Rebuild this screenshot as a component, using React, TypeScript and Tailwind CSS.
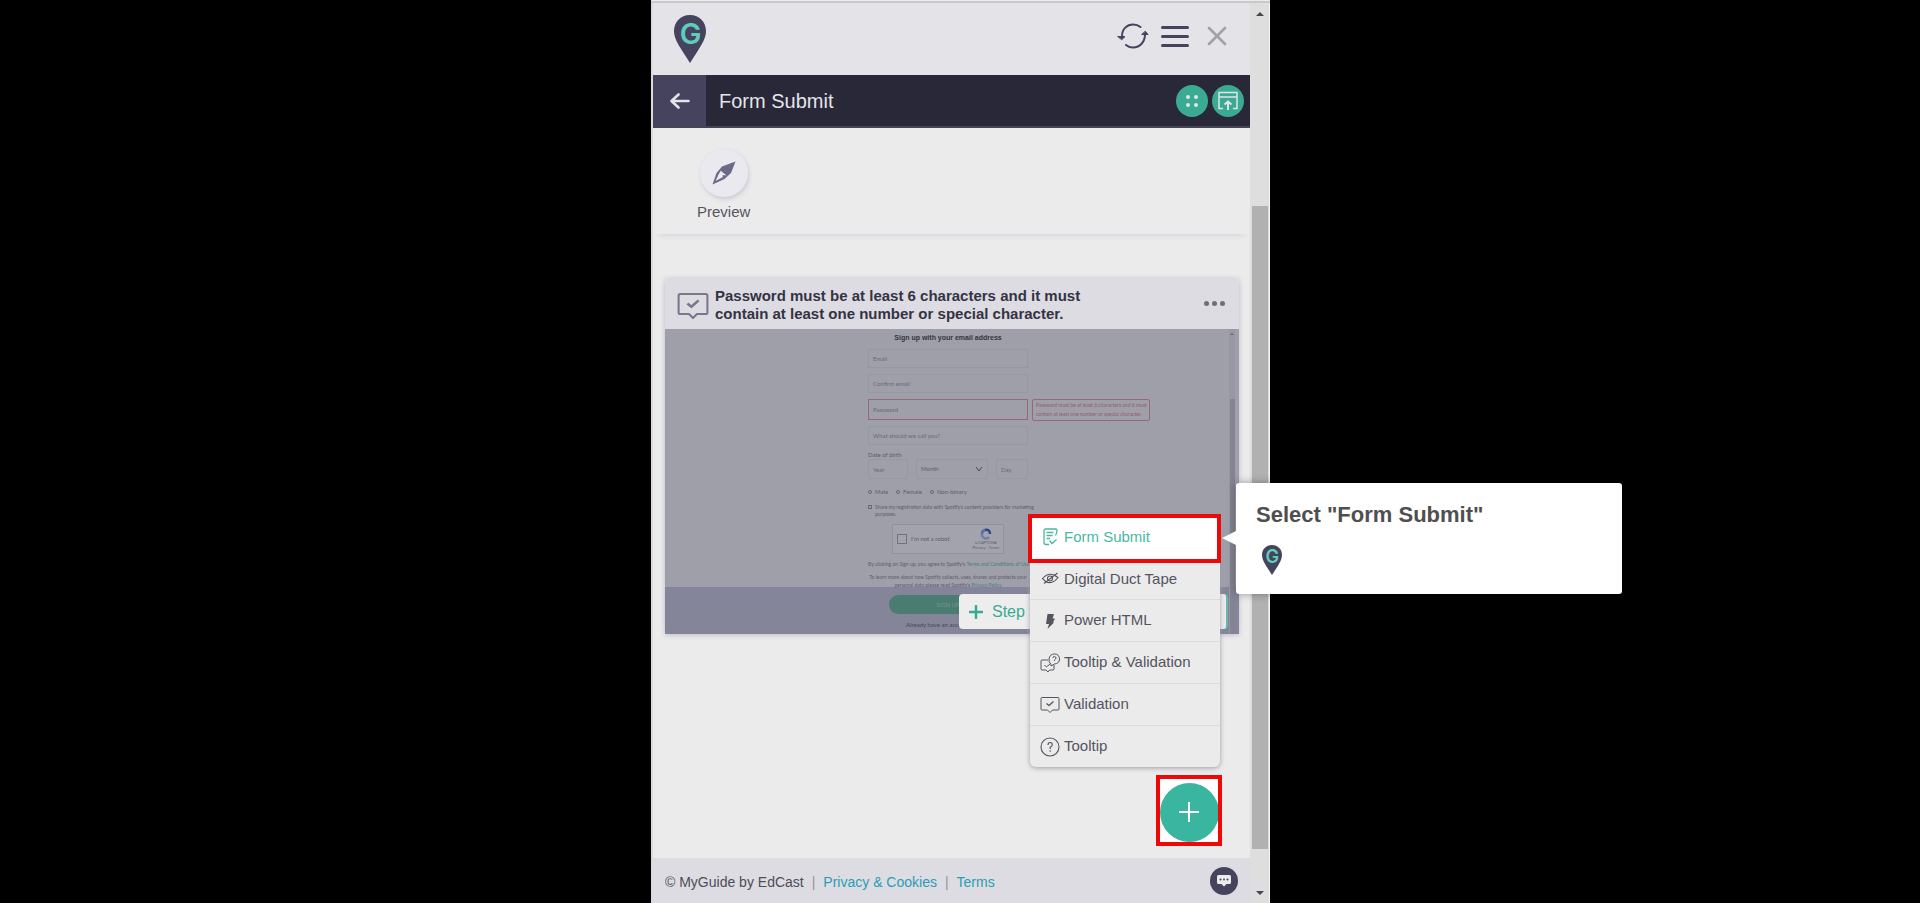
import React from 'react';
import { X } from 'lucide-react';

type IconProps = { className?: string };

const PinLogo: React.FC<IconProps> = ({ className }) => (
  <svg viewBox="0 0 34 48" className={className} aria-hidden="true">
    <path d="M17 0C7.500 0 1 7 1 16c0 7 4 13 8 19.500L17 48l8-12.500C29 29 33 23 33 16 33 7 26.500 0 17 0z" fill="#45435d" />
    <text x="17.500" y="28.500" textAnchor="middle" fontFamily="Inter, sans-serif" fontSize="29" fontWeight="600" fill="#5fcdbb">G</text>
  </svg>
);

const RefreshIcon: React.FC<IconProps> = ({ className }) => (
  <svg viewBox="0 0 32 28" fill="none" stroke="currentColor" strokeWidth="2" strokeLinecap="round" className={className} aria-hidden="true">
    <path d="M5 14C5 7 10 2.500 16 2.500c3 0 5.500.8 7.500 2.500" />
    <path d="M28 12c0 8-5 13.500-12 13.500-3 0-5-.8-7-2.500" />
    <path d="M1 14.500h7L5 17.500z" fill="currentColor" strokeWidth="1" />
    <path d="M25 12.500h6L28.500 9.500z" fill="currentColor" strokeWidth="1" />
  </svg>
);

const BackIcon: React.FC<IconProps> = ({ className }) => (
  <svg viewBox="0 0 20 16" fill="none" stroke="currentColor" strokeWidth="2.600" strokeLinecap="round" strokeLinejoin="round" className={className} aria-hidden="true">
    <path d="M18.500 8H2M8.500 1.500L1.500 8l7 6.500" />
  </svg>
);

const WindowUpIcon: React.FC<IconProps> = ({ className }) => (
  <svg viewBox="0 0 20 20" fill="none" stroke="currentColor" strokeWidth="1.500" className={className} aria-hidden="true">
    <path d="M5 17.500H1V1.500h18v16h-4M1 6h18" />
    <path d="M10 19v-8M6.500 13.500L10 10.500l3.500 3" strokeWidth="2" />
  </svg>
);

const CompassIcon: React.FC<IconProps> = ({ className }) => (
  <svg viewBox="0 0 24 24" className={className} aria-hidden="true">
    <path d="M23.500.500L10 5.500 4.500 12 .500 23.500l12-5.500L19 12z" fill="#6b6987" />
    <path d="M8.500 10l-2 3.500L3.500 20l7.500-4z" fill="#ebebf0" />
    <path d="M8.500 9.500l6 5-4-.500-.500 2.500z" fill="#ebebf0" />
  </svg>
);

const ChatIcon: React.FC<IconProps> = ({ className }) => (
  <svg viewBox="0 0 16 14" className={className} aria-hidden="true">
    <path d="M2.500 1h11Q15 1 15 2.500v6Q15 10 13.500 10H10.500L8 12.500 5.500 10h-3Q1 10 1 8.500v-6Q1 1 2.500 1z" fill="#ebebeb" />
    <g fill="#45435d">
      <circle cx="4.500" cy="5.500" r="1" />
      <circle cx="8" cy="5.500" r="1" />
      <circle cx="11.500" cy="5.500" r="1" />
    </g>
  </svg>
);

const ValidationIcon: React.FC<IconProps & { strokeWidth?: number }> = ({ className, strokeWidth = 1 }) => (
  <svg viewBox="0 0 20 17" fill="none" stroke="currentColor" strokeLinejoin="round" className={className} aria-hidden="true">
    <path d="M2 1h16q1 0 1 1v10.500q0 1-1 1h-5.500L10 16l-2.500-2.500H2q-1 0-1-1V2q0-1 1-1z" strokeWidth={strokeWidth} />
    <path d="M6.500 7l2.500 2 4.500-4" strokeWidth={strokeWidth + 0.3} />
  </svg>
);

const FormSubmitIcon: React.FC<IconProps> = ({ className }) => (
  <svg viewBox="0 0 20 20" fill="none" stroke="currentColor" strokeWidth="1.300" className={className} aria-hidden="true">
    <path d="M9 17.500H6Q4 17.500 4 15.500V3.500Q4 2 5.500 2h10Q17 2 17 3.500q0 2-1.500 5M6.500 5.500h7M6.500 8.500h6M6.500 11.500h3.500" />
    <path d="M9.500 13.500l2.500 3 4.500-4" />
  </svg>
);

const DuctTapeIcon: React.FC<IconProps> = ({ className }) => (
  <svg viewBox="0 0 20 20" fill="none" stroke="currentColor" strokeWidth="1.100" className={className} aria-hidden="true">
    <path d="M2.500 9.500Q8 3.500 14 6l4 2.500q-5 7-12 4.500z" />
    <circle cx="10" cy="9.500" r="2.500" />
    <path d="M4 14.500L17.500 4" />
  </svg>
);

const PowerIcon: React.FC<IconProps> = ({ className }) => (
  <svg viewBox="0 0 20 20" fill="currentColor" className={className} aria-hidden="true">
    <path d="M7.500 3h6.500l-1.500 4.500h2.500l-2 4h1L7.500 18l1.500-5H6z" />
  </svg>
);

const TooltipIcon: React.FC<IconProps> = ({ className }) => (
  <svg viewBox="0 0 20 20" fill="none" stroke="currentColor" className={className} aria-hidden="true">
    <circle cx="10" cy="10" r="9" strokeWidth="1.100" />
    <path d="M8 8q0-2.500 2.200-2.500T12.200 8Q12 9.500 10.200 10.200V12M10.200 13.300v1.400" strokeWidth="1.200" />
  </svg>
);

const TooltipValidationIcon: React.FC<IconProps> = ({ className }) => (
  <svg viewBox="0 0 20 20" fill="none" stroke="currentColor" strokeWidth="1" className={className} aria-hidden="true">
    <path d="M8 7H2Q1 7 1 8v8q0 1 1 1h4l2 2 1.500-2H13q1 0 1-1v-4" />
    <path d="M11 11.500Q8.500 9 9 6q.8-5 5.500-5T19.500 6q0 4.500-5 5l-3.500 2z" />
    <path d="M13 5q0-1.700 1.500-1.500T16 5q0 1-1.500 1.800v1M4.500 12l2 2 4-3.500" />
  </svg>
);

const menuItems = [
  { label: 'Form Submit', Icon: FormSubmitIcon },
  { label: 'Digital Duct Tape', Icon: DuctTapeIcon },
  { label: 'Power HTML', Icon: PowerIcon },
  { label: 'Tooltip & Validation', Icon: TooltipValidationIcon },
  { label: 'Validation', Icon: ValidationIcon },
  { label: 'Tooltip', Icon: TooltipIcon },
];

const TopBar: React.FC = () => (
  <header className="flex h-18 items-center justify-between bg-[#e4e3e8] pr-[17px] pl-5">
    <PinLogo className="h-12 w-[34px]" />
    <div className="flex items-center gap-3 pb-[6px] text-[#45435d]">
      <button aria-label="Refresh"><RefreshIcon className="h-7 w-8" /></button>
      <button aria-label="Menu" className="flex w-7 flex-col gap-[6px]">
        <span className="h-[3px] rounded-full bg-current" />
        <span className="h-[3px] rounded-full bg-current" />
        <span className="h-[3px] rounded-full bg-current" />
      </button>
      <button aria-label="Close" className="text-[#a3a2a7]"><X size={32} strokeWidth={2} /></button>
    </div>
  </header>
);

const TitleBar: React.FC = () => (
  <div className="flex h-[53px] items-center border-b-2 border-[#454452] bg-[#282839] text-[#e4e4e8]">
    <button aria-label="Back" className="flex h-full w-[53px] items-center justify-center bg-[#45435d]">
      <BackIcon className="h-4 w-5" />
    </button>
    <h1 className="grow pl-[13px] text-[20px]">Form Submit</h1>
    <div className="flex gap-1 pr-[6px]">
      <button aria-label="Steps" className="flex size-8 items-center justify-center rounded-full bg-[#3aaa93]">
        <span className="grid grid-cols-2 gap-1">
          <span className="size-1 rounded-full bg-current" />
          <span className="size-1 rounded-full bg-current" />
          <span className="size-1 rounded-full bg-current" />
          <span className="size-1 rounded-full bg-current" />
        </span>
      </button>
      <button aria-label="Publish" className="flex size-8 items-center justify-center rounded-full bg-[#3aaa93]">
        <WindowUpIcon className="size-5" />
      </button>
    </div>
  </div>
);

const field = 'h-[19px] w-full border border-[#9898a3] bg-transparent px-1 text-[6px] placeholder:text-[#696975]';

const SignUpPreview: React.FC = () => (
  <div className="relative overflow-hidden bg-[#9f9faa] pr-2 font-[Lato,sans-serif] text-[6px] leading-[8px] text-[#5c5c68]">
    <form className="mx-auto flex h-[258px] w-40 flex-col pt-1">
      <h3 className="text-center font-['Liberation_Sans',Arial,sans-serif] text-[7px] leading-[10px] font-bold whitespace-nowrap text-[#33333f]">Sign up with your email address</h3>
      <div className="mt-[6px] flex flex-col gap-[6px]">
        <input aria-label="Email" placeholder="Email" className={field} />
        <input aria-label="Confirm email" placeholder="Confirm email" className={field} />
        <div className="relative">
          <input aria-label="Password" placeholder="Password" className="block h-[21px] w-full border border-[#96697a] px-1 text-[6px] placeholder:text-[#696975]" />
          <p className="absolute top-0 left-full ml-1 w-[118px] rounded-xs border border-[#96697a] px-[3px] py-px text-[5px] leading-[9px] whitespace-nowrap text-[#96596b]">
            Password must be at least 6 characters and it must<br />contain at least one number or special character.
          </p>
        </div>
        <input aria-label="What should we call you?" placeholder="What should we call you?" className={field} />
      </div>
      <p className="mt-[6px]">Date of birth</p>
      <div className="flex justify-between">
        <input aria-label="Year" placeholder="Year" className="h-5 w-10 border border-[#9898a3] px-1 placeholder:text-[#696975]" />
        <div className="flex h-5 w-[72px] items-center border border-[#9898a3] pr-1 pl-1">
          <select aria-label="Month" className="grow appearance-none">
            <option>Month</option>
          </select>
          <svg viewBox="0 0 8 6" className="h-[6px] w-2" fill="none" stroke="#4b4b58"><path d="M1 1l3 4 3-4" /></svg>
        </div>
        <input aria-label="Day" placeholder="Day" className="h-5 w-8 border border-[#9898a3] px-1 placeholder:text-[#696975]" />
      </div>
      <div className="mt-[9px] flex gap-2">
        {['Male', 'Female', 'Non-binary'].map((gender) => (
          <label key={gender} className="flex items-center gap-[3px]">
            <input type="radio" name="gender" className="size-1 appearance-none rounded-full border border-[#696975]" />
            {gender}
          </label>
        ))}
      </div>
      <label className="mt-2 flex items-start gap-[3px] text-[5px] leading-[7px]">
        <input type="checkbox" className="mt-px size-1 shrink-0 appearance-none border border-[#696975]" />
        <span className="whitespace-nowrap">Share my registration data with Spotify's content providers for marketing<br />purposes.</span>
      </label>
      <div className="mx-auto mt-[6px] flex h-[30px] w-28 shrink-0 items-center gap-1 border border-[#92929d] bg-[#a3a3ae] pr-1 pl-1">
        <input type="checkbox" id="robot" className="size-[10px] appearance-none border border-[#73737f]" />
        <label htmlFor="robot" className="grow">I'm not a robot</label>
        <div className="flex flex-col items-center text-[4px] leading-[5px]">
          <svg viewBox="0 0 12 12" className="size-3" fill="none" strokeWidth="2.500">
            <path d="M2 6a4 4 0 0 0 7 3" stroke="#73809b" />
            <path d="M2 6a4 4 0 0 1 3-4" stroke="#5570a8" />
            <path d="M5 2q5-1 5 4" stroke="#2c488f" />
          </svg>
          <span>reCAPTCHA</span>
          <span>Privacy - Terms</span>
        </div>
      </div>
      <p className="mt-[6px] text-center text-[5px] whitespace-nowrap">
        By clicking on Sign up, you agree to Spotify's <a href="#terms" className="text-[#4a7d78]">Terms and Conditions of Use</a>
      </p>
      <p className="mt-[5px] text-center text-[5px] leading-[8px] whitespace-nowrap">
        To learn more about how Spotify collects, uses, shares and protects your<br />personal data please read Spotify's <a href="#privacy" className="text-[#4a7d78]">Privacy Policy</a>
      </p>
    </form>
    <div className="-mr-2 flex h-[47px] flex-col items-center gap-[7px] bg-[#858599] pt-2 pr-2 text-[#454553]">
      <button className="h-[19px] w-[118px] rounded-full bg-[#4a7c72] text-[#719890]">SIGN UP</button>
      <p>Already have an account? Log in</p>
    </div>
    <div className="absolute top-0 right-1 bottom-0 flex w-[6px] flex-col items-center bg-[#9898a4] pt-1">
      <span className="border-x-2 border-b-2 border-x-transparent border-b-[#696975]" />
      <span className="mt-16 w-[5px] grow bg-[#838391]" />
    </div>
    <button className="absolute right-[11px] bottom-[5px] flex h-[35px] w-[269px] items-center gap-2 rounded-sm border-r-2 border-[#68b7aa] bg-[#ededed] pl-[9px] font-['Liberation_Sans',Arial,sans-serif] text-[16px] text-[#3aaa93]">
      <svg viewBox="0 0 16 16" className="size-4" stroke="currentColor" strokeWidth="2.500"><path d="M8 1v14M1 8h14" /></svg>
      Step
    </button>
  </div>
);

const StepCard: React.FC = () => (
  <section className="mt-11 mr-[11px] ml-3 rounded-t-sm shadow-[0_1px_5px_#bbbac8]">
    <div className="flex h-[51px] items-center gap-[6px] rounded-t-sm bg-[#dddce2] px-3">
      <ValidationIcon className="mt-1 h-7 w-8 shrink-0 text-[#78778d]" strokeWidth={1.3} />
      <h2 className="max-w-[400px] grow pt-[2px] text-[15px] leading-[18px] font-bold text-[#343344]">
        Password must be at least 6 characters and it must contain at least one number or special character.
      </h2>
      <button aria-label="More options" className="ml-auto flex gap-[3px] pr-[2px]">
        <span className="size-[5px] rounded-full bg-[#6f6e78]" />
        <span className="size-[5px] rounded-full bg-[#6f6e78]" />
        <span className="size-[5px] rounded-full bg-[#6f6e78]" />
      </button>
    </div>
    <SignUpPreview />
  </section>
);

const Callout: React.FC = () => (
  <div role="tooltip" className="absolute -top-8 left-full ml-4 h-[111px] w-[386px] rounded-[3px] bg-white px-5 pt-4 shadow-[0_0_8px_rgba(0,0,0,0.35)]">
    <span className="absolute top-12 right-full border-y-[7px] border-r-[14px] border-y-transparent border-r-white" />
    <p className="text-[22px] leading-8 font-bold text-[#4f4f4f]">Select "Form Submit"</p>
    <PinLogo className="mt-[14px] ml-[5px] h-[30px] w-[22px]" />
  </div>
);

const AddMenu: React.FC = () => (
  <div className="absolute right-[30px] bottom-34 w-[190px]">
    <ul className="rounded-md bg-[#ebebeb] text-[15px] text-[#55545f] shadow-[0_1px_5px_#9d9da5]">
      {menuItems.map(({ label, Icon }, index) => (
        <li key={label} className={index === 0 ? 'relative text-[#4bb7a1]' : index > 1 ? 'border-t border-[#dcdce0]' : ''}>
          {index === 0 && <span className="absolute -top-px -right-px -bottom-[6px] -left-[2px] border-4 border-[#ee0808] bg-white" />}
          <button className={`relative flex w-full items-center gap-1 pl-[10px] ${index > 1 ? 'h-[41px]' : 'h-[42px] pt-[2px]'}`}>
            <Icon className="size-5 shrink-0" />
            {label}
          </button>
        </li>
      ))}
    </ul>
    <Callout />
  </div>
);

const Footer: React.FC = () => (
  <footer className="flex h-[45px] items-center justify-between bg-[#dddce2] pr-3 pl-3 text-[14px] text-[#4d4c59]">
    <p className="flex gap-2 pt-1">
      <span>© MyGuide by EdCast</span>
      <span className="text-[#94939d]">|</span>
      <a href="#privacy" className="text-[#2b9cb5]">Privacy &amp; Cookies</a>
      <span className="text-[#94939d]">|</span>
      <a href="#terms" className="text-[#2b9cb5]">Terms</a>
    </p>
    <button aria-label="Chat" className="flex size-7 items-center justify-center rounded-full bg-[#45435d]">
      <ChatIcon className="h-[14px] w-4" />
    </button>
  </footer>
);

const Scrollbar: React.FC = () => (
  <div className="flex w-5 shrink-0 flex-col items-center border-r border-[#f4f4f4] bg-[#dedede]" aria-hidden="true">
    <span className="mt-[9px] mb-[9px] border-x-4 border-b-4 border-x-transparent border-b-[#45454a]" />
    <span className="grow-[181]" />
    <span className="w-4 grow-[643] bg-[#b1b1b1]" />
    <span className="grow-[34]" />
    <span className="mt-2 mb-2 border-x-4 border-t-4 border-x-transparent border-t-[#45454a]" />
  </div>
);

const App: React.FC = () => {
  return (
    <main className="flex min-h-screen justify-center overflow-hidden bg-black pl-px font-['Liberation_Sans',Arial,sans-serif]">
      <div className="flex w-full max-w-[619px] flex-col bg-[#ebebeb]">
        <div className="h-[3px] border-b-2 border-[#c9c9cb]" />
        <div className="flex grow border-l-2 border-[#dadadc]">
          <div className="relative flex min-w-0 grow flex-col">
            <TopBar />
            <TitleBar />
            <nav className="flex h-[106px] items-end pb-[11px] pl-11 shadow-[0_6px_6px_-5px_#d2d2de]">
              <button className="flex flex-col items-center gap-1 text-[15px] text-[#55545f]">
                <span className="flex size-12 items-center justify-center rounded-full bg-[#e9e9ef] shadow-[1px_2px_4px_#c9c8d6]">
                  <CompassIcon className="size-6" />
                </span>
                Preview
              </button>
            </nav>
            <StepCard />
            <div className="grow" />
            <Footer />
            <AddMenu />
            <div className="absolute right-7 bottom-[57px] flex h-[71px] w-[66px] items-center justify-center overflow-hidden border-4 border-[#ee0808] bg-white pt-[3px]">
              <button aria-label="Add step" className="flex size-[59px] shrink-0 items-center justify-center rounded-full bg-[#3ab5a0]">
                <svg viewBox="0 0 20 20" className="size-5" stroke="#ffffff" strokeWidth="2"><path d="M10 0v20M0 10h20" /></svg>
              </button>
            </div>
          </div>
          <Scrollbar />
        </div>
      </div>
    </main>
  );
};

export default App;
